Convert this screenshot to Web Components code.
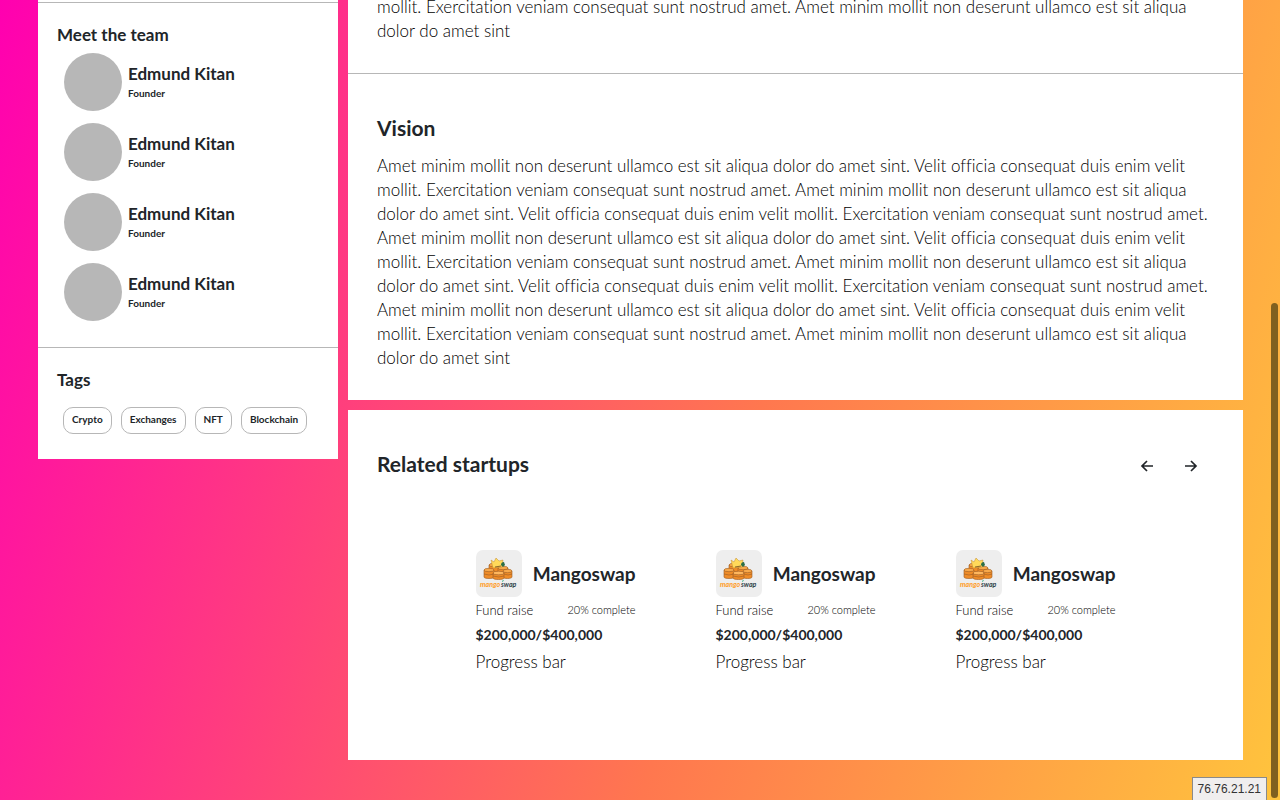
<!DOCTYPE html>
<html lang="en">
<head>
<meta charset="utf-8">
<title>Startup profile</title>
<style>
html{height:100%;overflow:hidden}
body{margin:0;min-height:100%;font:16px/24px Lato,"Noto Sans",sans-serif;font-variant-ligatures:none;color:#212529;background:linear-gradient(107deg,#ff00b0 0%,#ff774f 58%,#ffc43d 100%)}
</style>
</head>
<body>
<startup-page></startup-page>
<script>
const define=(name,html,setup)=>customElements.define(name,class extends HTMLElement{
  constructor(){
    super();
    this.attachShadow({mode:'open'}).innerHTML=html;
    if(setup)setup(this,this.shadowRoot);
  }
});

define('team-member',`<style>
:host{display:flex;align-items:center;gap:6px;height:70px}
.avatar{width:58px;height:58px;border-radius:50%;background:#b7b7b7}
.text{padding-top:2px}
.name{font-size:17px;line-height:20px;font-weight:700}
.role{font-size:10px;line-height:18px;font-weight:700}
</style><div class="avatar"></div><div class="text"><div class="name"><slot name="name"></slot></div><div class="role"><slot name="role"></slot></div></div>`);

define('tag-chip',`<style>
:host{display:block}
button{display:block;height:27px;padding:0 8px 2px;border:1px solid #b7b7b7;border-radius:10px;background:#fff;color:inherit;font:700 10px/23px Lato,sans-serif;cursor:pointer}
</style><button type="button"><slot></slot></button>`);

define('mango-logo',`<style>
:host{display:block;width:46px;height:47px;border-radius:7px;background:#eee}
svg{display:block}
text{font:italic 700 7px Lato,sans-serif}
</style><svg width="46" height="47" viewBox="0 0 46 47" role="img" aria-label="Mangoswap logo">
<g fill="#ef8c28" stroke="#9a5a24" stroke-width=".6">
<path d="M13 15v6c0 2 10 2 10 0v-6z"/><ellipse cx="18" cy="15" rx="5" ry="1.700" fill="#f8a94b"/>
<path d="M22 18v6c0 2 10 2 10 0v-6z"/><ellipse cx="27" cy="18" rx="5" ry="1.700" fill="#f8a94b"/>
<path d="M8 20v7c0 2 10 2 10 0v-7z"/><ellipse cx="13" cy="20" rx="5" ry="1.700" fill="#f8a94b"/>
<path d="M27 21v6c0 2 9 2 9 0v-6z"/><ellipse cx="31.500" cy="21" rx="4.500" ry="1.700" fill="#f8a94b"/>
<path d="M17 23v5c0 2 11 2 11 0v-5z"/><ellipse cx="22.500" cy="23" rx="5.500" ry="1.800" fill="#ffb75e"/>
<path d="M8 24q5 2 10 0M17 26q6 2 11 0M28 24q4 2 8 0" fill="none"/>
</g>
<path d="m15 10 3 2 2-4 3 3 4-1-1 7-9 1z" fill="#ffd95a" stroke="#c28a2c" stroke-width=".5"/>
<path d="M25 15q0-3 3-3l1 3-2 2z" fill="#2d6e46"/><path d="m19 17 6-1" stroke="#593513" stroke-width=".7"/>
<text x="4" y="37" fill="#ff9b25">mango</text><text x="25" y="37" fill="#31434a">swap</text>
<path d="M26 32q0-2 2-2-1 2-2 2" fill="#23a778"/>
</svg>`);

define('startup-card',`<style>
:host{display:block;width:160px}
.head,.raise{display:flex;align-items:center;justify-content:space-between}
.head{white-space:nowrap}
h3{margin:0;font-size:19px;line-height:24px;font-weight:700}
.raise{height:26px;font-size:13px;font-weight:300;color:#000}
.raise small{font-size:11px}
.sum{font-size:14px;line-height:24px;font-weight:700}
.bar{font-size:17px;line-height:30px;font-weight:300;color:#000}
</style><div class="head"><mango-logo></mango-logo><h3><slot></slot></h3></div>
<div class="raise"><span>Fund raise</span><small>20% complete</small></div>
<div class="sum">$200,000/$400,000</div><div class="bar">Progress bar</div>`);

define('arrow-button',`<style>
:host{display:block}
button{display:block;width:24px;height:24px;padding:4px;border:0;background:none;color:inherit;cursor:pointer}
:host([next]) svg{transform:scaleX(-1)}
svg{display:block}
</style><button type="button"><svg width="16" height="16" viewBox="0 0 16 16" fill="none" stroke="currentColor" stroke-width="1.700"><path d="M14 8H3M8 3 3 8l5 5"/></svg></button>`,
(host,root)=>root.querySelector('button').setAttribute('aria-label',host.hasAttribute('next')?'Next':'Previous'));

define('side-panel',`<style>
:host{display:block;background:#fff;padding-top:2px;box-sizing:border-box}
section{border-top:1px solid #b7b7b7;padding:19px 19px 20px}
section.tags{padding-bottom:25px}
h2{margin:0;font-size:17px;line-height:25px;font-weight:700}
.team{padding-left:7px}
.chips{display:flex;gap:9px;padding:15px 0 0 6px}
</style><section><h2>Meet the team</h2><div class="team">${'<team-member><span slot="name">Edmund Kitan</span><span slot="role">Founder</span></team-member>'.repeat(4)}</div></section>
<section class="tags"><h2>Tags</h2><div class="chips"><tag-chip>Crypto</tag-chip><tag-chip>Exchanges</tag-chip><tag-chip>NFT</tag-chip><tag-chip>Blockchain</tag-chip></div></section>`);

const once='Amet minim mollit non deserunt ullamco est sit aliqua dolor do amet sint. Velit officia consequat duis enim velit mollit. Exercitation veniam consequat sunt nostrud amet. ';
const copy=once.repeat(5)+'Amet minim mollit non deserunt ullamco est sit aliqua dolor do amet sint';
define('about-panel',`<style>
:host{display:block;background:#fff}
.prior{height:73px;overflow:hidden;display:flex;flex-direction:column;justify-content:flex-end;padding:0 29px 30px;box-sizing:border-box}
.vision{border-top:1px solid #b7b7b7;padding:39px 29px 30px}
h2{margin:0 0 11px;font-size:21px;line-height:30px;font-weight:700}
p{margin:0;font-size:17px;line-height:24px;font-weight:300;color:#000}
</style><div class="prior"><p>${copy}</p></div>
<section class="vision"><h2>Vision</h2><p>${copy}</p></section>`);

define('related-panel',`<style>
:host{display:block;background:#fff;padding:39px 29px 83px}
header{display:flex;align-items:center;justify-content:space-between;padding-right:11px}
h2{margin:0;font-size:21px;line-height:30px;font-weight:700}
nav{display:flex;gap:20px;padding-top:4px}
.cards{display:flex;justify-content:center;gap:80px;padding-top:71px}
</style><header><h2>Related startups</h2><nav aria-label="Related startups"><arrow-button></arrow-button><arrow-button next></arrow-button></nav></header>
<div class="cards">${'<startup-card>Mangoswap</startup-card>'.repeat(3)}</div>`);

define('status-tip',`<style>
:host{position:fixed;right:13px;bottom:0;border:1px solid #8a8a8a;border-bottom:0;background:#f0eeee;padding:0 5px;font:12px/22px "Liberation Sans",sans-serif;color:#333}
</style><slot></slot>`);

define('scroll-thumb',`<style>
:host{position:fixed;right:2px;top:303px;bottom:2px;width:7px;border-radius:4px;background:#80601f}
</style>`);

define('startup-page',`<style>
:host{display:block;padding:0 37px 40px 38px}
main{display:grid;grid-template-columns:300px minmax(0,1fr);gap:10px;align-items:start}
.content{display:grid;gap:10px}
</style><main><side-panel></side-panel><div class="content"><about-panel></about-panel><related-panel></related-panel></div></main>
<scroll-thumb></scroll-thumb><status-tip>76.76.21.21</status-tip>`);
</script>
</body>
</html>
